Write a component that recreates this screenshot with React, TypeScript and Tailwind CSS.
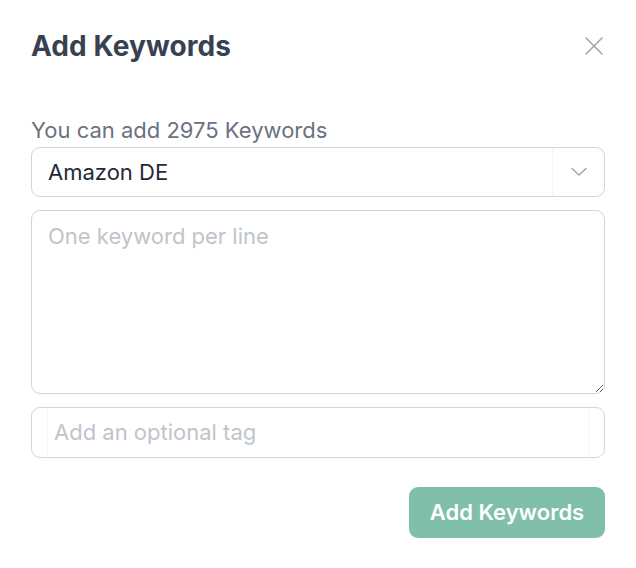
import React from "react";

export default function App() {
  return (
    <div className="w-[636px] h-[568px] bg-white" style={{ fontFamily: "Inter, 'Noto Sans', sans-serif" }}>
      <div className="px-[31px] pt-[29px]">
        <div className="flex items-start justify-between h-[34px]">
          <h1 className="text-[28px] leading-[34px] font-bold text-[#374151] tracking-[0.1px]">Add Keywords</h1>
          <button className="mt-[7px] mr-[1px] text-[#9ca3af]">
            <svg width="20" height="20" viewBox="0 0 20 20" fill="none" stroke="currentColor" strokeWidth="1.5" strokeLinecap="round">
              <path d="M2 2L18 18M18 2L2 18" />
            </svg>
          </button>
        </div>
        <div className="mt-[53px] h-[28px] text-[22px] leading-[28px] text-[#6b7280]">You can add 2975 Keywords</div>
        <div className="mt-[3px] h-[50px] flex items-center rounded-[9px] border border-[#d1d5db]">
          <div className="flex-1 pl-[16px] text-[22px] text-[#1f2937]">Amazon DE</div>
          <div className="w-px h-[48px] bg-[#f3f4f6]" />
          <div className="w-[51px] flex justify-center text-[#9ca3af]">
            <svg width="20" height="20" viewBox="0 0 20 20" fill="none" stroke="currentColor" strokeWidth="1.4" strokeLinecap="round" strokeLinejoin="round">
              <path d="M3 6.5L10 13L17 6.5" />
            </svg>
          </div>
        </div>
        <textarea
          className="mt-[13px] block w-full h-[184px] rounded-[9px] border border-[#d1d5db] px-[16px] py-[11px] text-[22px] leading-[28px] placeholder:text-[#c0c4cb] outline-none resize-y"
          placeholder="One keyword per line"
        />
        <div className="mt-[13px] h-[51px] flex items-center rounded-[9px] border border-[#d1d5db]">
          <div className="w-[15px]" />
          <div className="w-px h-[49px] bg-[#f3f4f6]" />
          <input className="flex-1 min-w-0 pl-[6px] text-[22px] placeholder:text-[#c0c4cb] outline-none" placeholder="Add an optional tag" />
          <div className="w-px h-[49px] bg-[#f3f4f6]" />
          <div className="w-[15px]" />
        </div>
        <div className="mt-[29px] flex justify-end">
          <button className="h-[51px] w-[196px] rounded-[9px] bg-[#80bfaa] text-white text-[22px] font-semibold">Add Keywords</button>
        </div>
      </div>
    </div>
  );
}
